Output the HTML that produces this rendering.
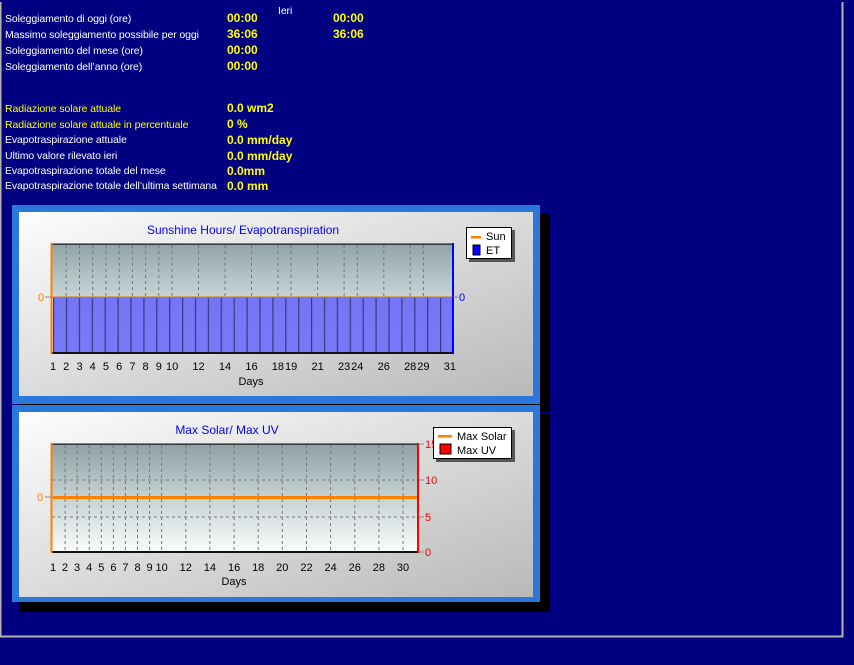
<!DOCTYPE html>
<html><head><meta charset="utf-8"><style>
html,body{margin:0;padding:0;background:#000080;width:854px;height:665px;overflow:hidden}
svg{display:block}
.l{font-family:"Liberation Sans",sans-serif;font-size:10.5px;fill:#fff;letter-spacing:-0.1px}
.y{fill:#ffff00}
.v{font-family:"Liberation Sans",sans-serif;font-size:12px;font-weight:bold;fill:#ffff00}
.ax{font-family:"Liberation Sans",sans-serif;font-size:11px;fill:#000}
.t{font-family:"Liberation Sans",sans-serif;font-size:12px;fill:#0000ff}
</style></head><body>
<svg width="854" height="665" xmlns="http://www.w3.org/2000/svg">
<defs>
<linearGradient id="pg" x1="0" y1="0" x2="1" y2="1"><stop offset="0" stop-color="#fdfdfd"/><stop offset="1" stop-color="#b9b9b9"/></linearGradient>
<linearGradient id="pl1" x1="0" y1="0" x2="0" y2="1"><stop offset="0" stop-color="#90a4a6"/><stop offset="1" stop-color="#c9d5d6"/></linearGradient>
<linearGradient id="pl2" x1="0" y1="0" x2="0" y2="1"><stop offset="0" stop-color="#8fa2a4"/><stop offset="0.5" stop-color="#c6d2d3"/><stop offset="1" stop-color="#fbfcfc"/></linearGradient>
<linearGradient id="bg" x1="0" y1="0" x2="0" y2="1"><stop offset="0" stop-color="#5e5ee0"/><stop offset="1" stop-color="#7c7cfc"/></linearGradient>
<pattern id="bars" x="53" y="0" width="12.9" height="400" patternUnits="userSpaceOnUse"><rect x="0" y="0" width="12.9" height="400" fill="url(#bg)"/><rect x="0" y="0" width="1.2" height="400" fill="#333a80"/></pattern>
<pattern id="tk1" x="53" y="0" width="2.646" height="10" patternUnits="userSpaceOnUse"><rect x="0" y="0" width="1" height="3" fill="#555"/></pattern>
<pattern id="tk2" x="53" y="0" width="2.414" height="10" patternUnits="userSpaceOnUse"><rect x="0" y="0" width="1" height="3" fill="#555"/></pattern>
</defs>
<rect x="0.5" y="0" width="842" height="636.5" fill="#000080" stroke="#b8b4a8" stroke-width="2"/>
<rect x="0" y="0" width="854" height="2" fill="#000080"/>
<text class="l" x="278" y="14">Ieri</text>
<text class="l" x="5" y="22">Soleggiamento di oggi (ore)</text>
<text class="l" x="5" y="38">Massimo soleggiamento possibile per oggi</text>
<text class="l" x="5" y="54">Soleggiamento del mese (ore)</text>
<text class="l" x="5" y="70">Soleggiamento dell’anno (ore)</text>
<text class="v" x="227" y="22">00:00</text><text class="v" x="333" y="22">00:00</text>
<text class="v" x="227" y="38">36:06</text><text class="v" x="333" y="38">36:06</text>
<text class="v" x="227" y="54">00:00</text>
<text class="v" x="227" y="70">00:00</text>
<text class="l y" x="5" y="112">Radiazione solare attuale</text>
<text class="l y" x="5" y="128">Radiazione solare attuale in percentuale</text>
<text class="l" x="5" y="143">Evapotraspirazione attuale</text>
<text class="l" x="5" y="159">Ultimo valore rilevato ieri</text>
<text class="l" x="5" y="174">Evapotraspirazione totale del mese</text>
<text class="l" x="5" y="189">Evapotraspirazione totale dell’ultima settimana</text>
<text class="v" x="227" y="112">0.0 wm2</text>
<text class="v" x="227" y="128">0 %</text>
<text class="v" x="227" y="144">0.0 mm/day</text>
<text class="v" x="227" y="160">0.0 mm/day</text>
<text class="v" x="227" y="175">0.0mm</text>
<text class="v" x="227" y="190">0.0 mm</text>

<rect x="20" y="213" width="530" height="199" fill="#000"/>
<rect x="12" y="205" width="528" height="199" fill="#2a78dc"/>
<rect x="19" y="212" width="514" height="184" fill="url(#pg)"/>
<text class="t" x="243" y="234" text-anchor="middle">Sunshine Hours/ Evapotranspiration</text>
<rect x="52" y="244" width="401" height="53" fill="url(#pl1)"/>
<rect x="53" y="297" width="400" height="56" fill="url(#bars)"/>
<g stroke="#777" stroke-dasharray="3,3" stroke-width="1">
<path d="M66.2 245V297M79.5 245V297M92.7 245V297M105.9 245V297M119.2 245V297M132.4 245V297M145.6 245V297M158.8 245V297M172.1 245V297M198.5 245V297M225 245V297M251.5 245V297M277.9 245V297M291.1 245V297M317.6 245V297M344.1 245V297M357.3 245V297M383.8 245V297M410.2 245V297M423.4 245V297"/>
</g>
<rect x="52" y="243.5" width="401" height="1.2" fill="#111"/>
<rect x="52" y="296.5" width="401" height="1.5" fill="#e07000"/>
<rect x="52" y="352" width="401" height="2" fill="#111"/>
<rect x="53" y="354" width="398" height="3" fill="url(#tk1)"/>
<rect x="50.5" y="243" width="2" height="111" fill="#ff8000"/>
<rect x="452" y="243" width="2" height="111" fill="#0000ff"/>
<text class="ax" x="38" y="301" style="fill:#ff8000">0</text>
<text class="ax" x="459" y="301" style="fill:#0000ff">0</text>
<path d="M45 297H51M453 297H458" stroke="#888"/>
<g class="ax" text-anchor="middle">
<text x="53" y="370">1</text><text x="66.2" y="370">2</text><text x="79.5" y="370">3</text><text x="92.7" y="370">4</text><text x="105.9" y="370">5</text><text x="119.2" y="370">6</text><text x="132.4" y="370">7</text><text x="145.6" y="370">8</text><text x="158.8" y="370">9</text><text x="172.1" y="370">10</text><text x="198.5" y="370">12</text><text x="225" y="370">14</text><text x="251.5" y="370">16</text><text x="277.9" y="370">18</text><text x="291.1" y="370">19</text><text x="317.6" y="370">21</text><text x="344.1" y="370">23</text><text x="357.3" y="370">24</text><text x="383.8" y="370">26</text><text x="410.2" y="370">28</text><text x="423.4" y="370">29</text><text x="449.9" y="370">31</text>
<text x="251" y="385">Days</text>
</g>
<rect x="469" y="230" width="46" height="32" fill="#555"/>
<rect x="466.5" y="227.5" width="45" height="31" fill="#fff" stroke="#000"/>
<rect x="471" y="236" width="10" height="2.5" fill="#ff8000"/>
<rect x="473" y="245" width="7" height="10" fill="#0000ff" stroke="#000"/>
<text class="ax" x="486" y="240">Sun</text>
<text class="ax" x="486" y="254">ET</text>

<rect x="20" y="413" width="530" height="199" fill="#000"/>
<rect x="12" y="405" width="528" height="197" fill="#2a78dc"/>
<rect x="19" y="412" width="514" height="185" fill="url(#pg)"/>
<text class="t" x="227" y="434" text-anchor="middle">Max Solar/ Max UV</text>
<rect x="52" y="444" width="366" height="108" fill="url(#pl2)"/>
<g stroke="#777" stroke-dasharray="3,3" stroke-width="1">
<path d="M65.1 445V551M77.1 445V551M89.2 445V551M101.3 445V551M113.4 445V551M125.4 445V551M137.5 445V551M149.6 445V551M161.6 445V551M185.8 445V551M209.9 445V551M234.1 445V551M258.2 445V551M282.3 445V551M306.5 445V551M330.6 445V551M354.8 445V551M378.9 445V551M403 445V551M52 480H418M52 517H418"/>
</g>
<rect x="52" y="443.5" width="366" height="1.2" fill="#111"/>
<rect x="52" y="551" width="366" height="2" fill="#111"/>
<rect x="53" y="553" width="362" height="3" fill="url(#tk2)"/>
<rect x="53" y="496" width="364" height="3" fill="#ff8000"/>
<rect x="50.5" y="443" width="2" height="110" fill="#ff8000"/>
<rect x="417" y="443" width="2" height="110" fill="#ff0000"/>
<path d="M45 497H51M419 444H424M419 480H424M419 517H424M419 552H424" stroke="#888"/>
<text class="ax" x="37" y="501" style="fill:#ff8000">0</text>
<g class="ax">
<text x="425" y="448" style="fill:#ff0000">15</text><text x="425" y="484" style="fill:#ff0000">10</text><text x="425" y="521" style="fill:#ff0000">5</text><text x="425" y="556" style="fill:#ff0000">0</text>
</g>
<g class="ax" text-anchor="middle">
<text x="53" y="571">1</text><text x="65.1" y="571">2</text><text x="77.1" y="571">3</text><text x="89.2" y="571">4</text><text x="101.3" y="571">5</text><text x="113.4" y="571">6</text><text x="125.4" y="571">7</text><text x="137.5" y="571">8</text><text x="149.6" y="571">9</text><text x="161.6" y="571">10</text><text x="185.8" y="571">12</text><text x="209.9" y="571">14</text><text x="234.1" y="571">16</text><text x="258.2" y="571">18</text><text x="282.3" y="571">20</text><text x="306.5" y="571">22</text><text x="330.6" y="571">24</text><text x="354.8" y="571">26</text><text x="378.9" y="571">28</text><text x="403" y="571">30</text>
<text x="234" y="585">Days</text>
</g>
<rect x="436" y="430" width="79" height="32" fill="#555"/>
<rect x="433.5" y="427.5" width="78" height="31" fill="#fff" stroke="#000"/>
<rect x="438" y="435" width="14" height="2.5" fill="#ff8000"/>
<rect x="440" y="444" width="11" height="10" fill="#ff0000" stroke="#000"/>
<text class="ax" x="457" y="440">Max Solar</text>
<text class="ax" x="457" y="454">Max UV</text>
</svg>
</body></html>
